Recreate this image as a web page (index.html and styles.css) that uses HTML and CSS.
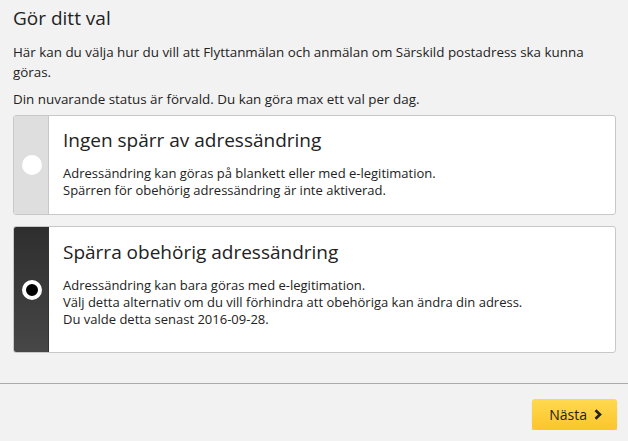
FILE: index.html
```html
<!DOCTYPE html>
<html lang="sv">
<head>
<meta charset="utf-8">
<link rel="stylesheet" href="styles.css">
</head>
<body>
<main class="page">
  <h1 class="title">Gör ditt val</h1>
  <p class="intro">Här kan du välja hur du vill att Flyttanmälan och anmälan om Särskild postadress ska kunna göras.</p>
  <p class="intro">Din nuvarande status är förvald. Du kan göra max ett val per dag.</p>

  <div class="options">
    <label class="option">
      <span class="strip"><span class="radio"></span></span>
      <span class="content">
        <span class="opt-title">Ingen spärr av adressändring</span>
        <span class="opt-text">Adressändring kan göras på blankett eller med e-legitimation.<br>Spärren för obehörig adressändring är inte aktiverad.</span>
      </span>
    </label>
    <label class="option selected">
      <span class="strip"><span class="radio"></span></span>
      <span class="content">
        <span class="opt-title">Spärra obehörig adressändring</span>
        <span class="opt-text">Adressändring kan bara göras med e-legitimation.<br>Välj detta alternativ om du vill förhindra att obehöriga kan ändra din adress.<br>Du valde detta senast 2016-09-28.</span>
      </span>
    </label>
  </div>
</main>
<footer class="footer">
  <button class="next">Nästa <svg class="chev" width="8" height="11" viewBox="0 0 8 11"><path d="M1.5 1.2 L6 5.5 L1.5 9.8" fill="none" stroke="#222" stroke-width="2.6"/></svg></button>
</footer>
</body>
</html>
```
FILE: styles.css
```css
html, body {
  margin: 0;
  padding: 0;
  background: #f2f2f2;
  font-family: "Open Sans", "DejaVu Sans", sans-serif;
  color: #222;
}
.page {
  padding: 0 12px 0 13px;
}
.title {
  margin: 0;
  padding-top: 5px;
  font-size: 19px;
  font-weight: 400;
  line-height: 26px;
  color: #222;
}
.intro {
  margin: 11px 0 0;
  font-size: 13.4px;
  line-height: 20px;
}
.intro + .intro {
  margin-top: 7px;
}
.options {
  margin-top: 6px;
  display: flex;
  flex-direction: column;
  gap: 11px;
}
.option {
  display: flex;
  background: #fff;
  border: 1px solid #c8c8c8;
  border-radius: 3px;
  overflow: hidden;
}
.strip {
  width: 34px;
  flex: none;
  background: #dedede;
  border-right: 1px solid #c8c8c8;
  display: flex;
  align-items: center;
  justify-content: center;
}
.option.selected .strip {
  background: linear-gradient(to bottom, #2e2e2e, #474747);
  border-right-color: #333;
}
.radio {
  width: 20px;
  height: 20px;
  margin-left: 1px;
  border-radius: 50%;
  background: #fff;
  box-sizing: border-box;
}
.option.selected .radio {
  border: 4.5px solid #fff;
  background: #000;
}
.content {
  display: flex;
  flex-direction: column;
  padding: 11px 14px 15px;
}
.opt-title {
  font-size: 19px;
  line-height: 26px;
}
.opt-text {
  margin-top: 12px;
  font-size: 13px;
  line-height: 17px;
}
.option.selected .content {
  padding-top: 12px;
  padding-bottom: 24px;
}
.footer {
  margin-top: 30px;
  border-top: 1px solid #aaa;
  padding: 15px 11px 0;
  display: flex;
  justify-content: flex-end;
}
.next {
  display: flex;
  align-items: center;
  gap: 7px;
  height: 31px;
  padding: 0 15px 0 17px;
  font-family: "Open Sans", "DejaVu Sans", sans-serif;
  font-size: 14px;
  color: #222;
  border: none;
  border-radius: 3px;
  background: linear-gradient(to bottom, #ffd94f, #fbc52b);
  box-shadow: 0 1px 1px rgba(0,0,0,0.25);
}
```
